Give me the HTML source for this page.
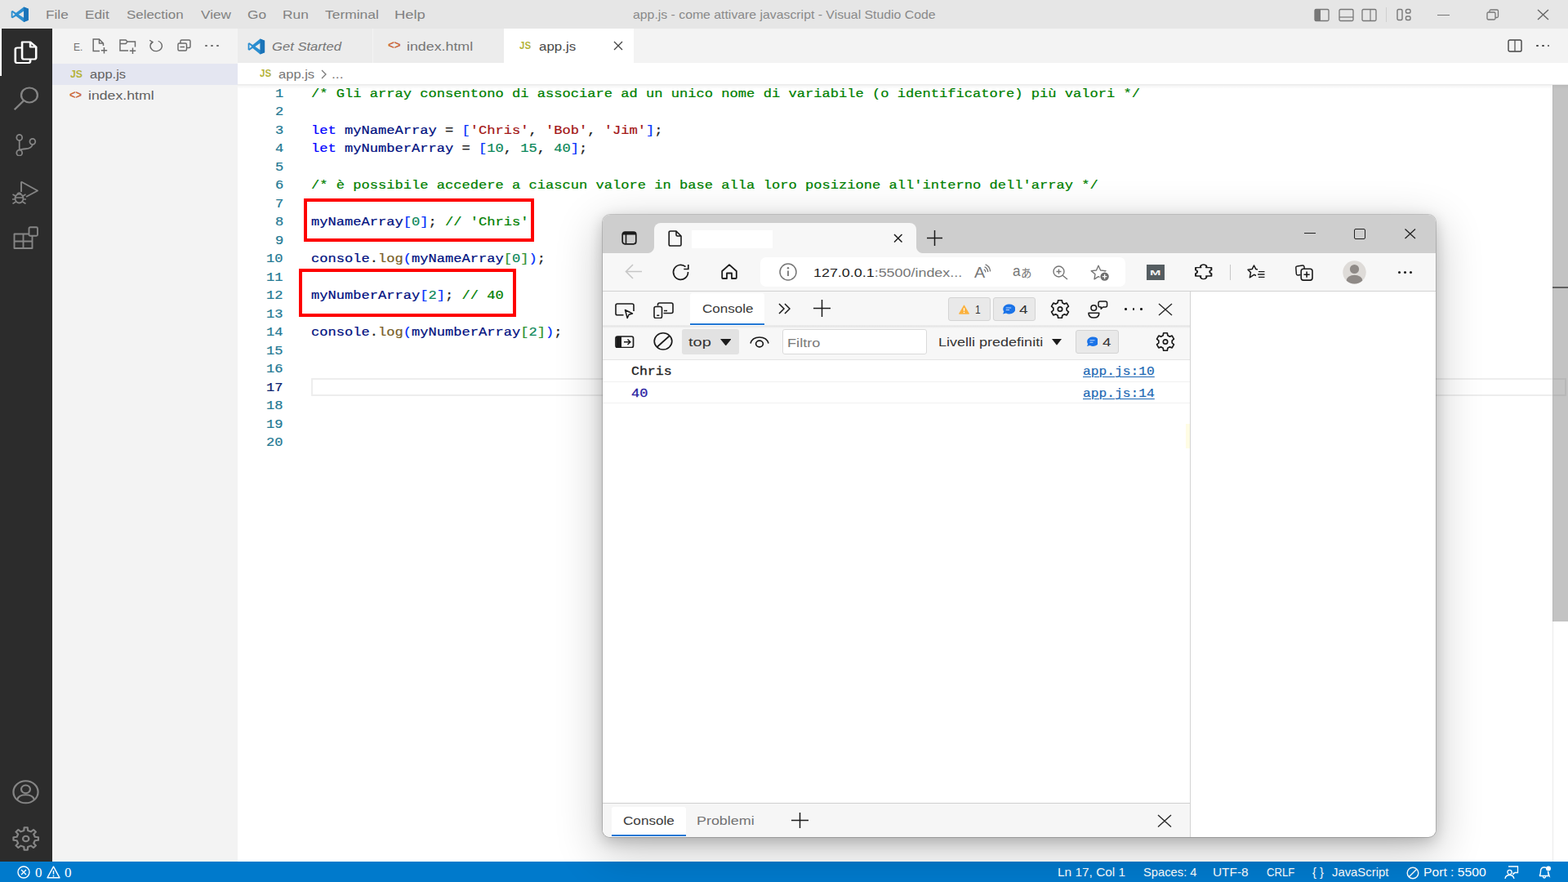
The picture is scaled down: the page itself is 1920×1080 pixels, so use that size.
<!DOCTYPE html>
<html lang="it"><head><meta charset="utf-8"><title>app.js - come attivare javascript - Visual Studio Code</title>
<style>
html,body{margin:0;padding:0;}
html{width:1920px;height:1080px;overflow:hidden;}
body{width:1920px;height:1080px;overflow:hidden;position:relative;background:#fff;font-family:"Liberation Sans",sans-serif;}
.root{position:absolute;left:0;top:0;width:1920px;height:1080px;overflow:hidden;}
.r{position:absolute;}
.i{position:absolute;display:block;}
.t{position:absolute;white-space:pre;line-height:24px;height:24px;transform-origin:0 50%;}
.win{position:absolute;left:738px;top:262.5px;width:1020px;height:762px;border-radius:9px;overflow:hidden;box-shadow:0 0 0 1px rgba(0,0,0,.17),0 16px 54px 5px rgba(0,0,0,.2),0 5px 18px rgba(0,0,0,.2);}
.wini{position:absolute;left:-738px;top:-262.5px;width:1920px;height:1080px;}
</style></head>
<body>
<div class="root">
<div class="r" style="left:0px;top:0px;width:1920px;height:35.5px;background:#e6e6e6;"></div>
<svg class="i" preserveAspectRatio="none" style="left:12.6px;top:8.4px;width:22.8px;height:19.4px;" viewBox="0 0 100 100"><path fill="#2b8ed0" d="M71 2 L96 14 V86 L71 98 L29 60 L11 74 L3 70 V30 L11 26 L29 40 Z M71 29 L43 50 L71 71 Z M11 38 V62 L24 50 Z"/><path fill="#1a73b8" d="M71 2 L96 14 V86 L71 98 Z"/></svg>
<span class="t" id="t0" style="left:55.81px;top:6.01px;font-size:14.5px;color:#818181;font-family:'Liberation Sans', sans-serif;transform:scaleX(1.1883);">File</span>
<span class="t" id="t1" style="left:103.81px;top:6.01px;font-size:14.5px;color:#818181;font-family:'Liberation Sans', sans-serif;transform:scaleX(1.1896);">Edit</span>
<span class="t" id="t2" style="left:155.0px;top:6.01px;font-size:14.5px;color:#818181;font-family:'Liberation Sans', sans-serif;transform:scaleX(1.1664);">Selection</span>
<span class="t" id="t3" style="left:246.0px;top:6.01px;font-size:14.5px;color:#818181;font-family:'Liberation Sans', sans-serif;transform:scaleX(1.1831);">View</span>
<span class="t" id="t4" style="left:303.0px;top:6.01px;font-size:14.5px;color:#818181;font-family:'Liberation Sans', sans-serif;transform:scaleX(1.1930);">Go</span>
<span class="t" id="t5" style="left:345.81px;top:6.01px;font-size:14.5px;color:#818181;font-family:'Liberation Sans', sans-serif;transform:scaleX(1.1944);">Run</span>
<span class="t" id="t6" style="left:398.0px;top:6.01px;font-size:14.5px;color:#818181;font-family:'Liberation Sans', sans-serif;transform:scaleX(1.2003);">Terminal</span>
<span class="t" id="t7" style="left:482.73px;top:6.01px;font-size:14.5px;color:#818181;font-family:'Liberation Sans', sans-serif;transform:scaleX(1.2693);">Help</span>
<span class="t" id="t8" style="left:775.0px;top:6.01px;font-size:14.5px;color:#8a8a8a;font-family:'Liberation Sans', sans-serif;transform:scaleX(1.0904);">app.js - come attivare javascript - Visual Studio Code</span>
<svg class="i" preserveAspectRatio="none" style="left:1608.8px;top:9.6px;width:19px;height:17px;" viewBox="0 0 19 17"><rect x="1" y="1.5" width="17" height="14" rx="1.5" fill="none" stroke="#777" stroke-width="1.3"/><rect x="1" y="1.5" width="7" height="14" fill="#777"/></svg>
<svg class="i" preserveAspectRatio="none" style="left:1638.6px;top:9.6px;width:19px;height:17px;" viewBox="0 0 19 17"><rect x="1" y="1.5" width="17" height="14" rx="1.5" fill="none" stroke="#777" stroke-width="1.3"/><path d="M1 11H18" stroke="#777" stroke-width="1.2"/></svg>
<svg class="i" preserveAspectRatio="none" style="left:1667.4px;top:9.6px;width:19px;height:17px;" viewBox="0 0 19 17"><rect x="1" y="1.5" width="17" height="14" rx="1.5" fill="none" stroke="#777" stroke-width="1.3"/><path d="M11 1.5V15.5" stroke="#777" stroke-width="1.2"/></svg>
<div class="r" style="left:1697px;top:9px;width:1px;height:18px;background:#cfcfcf;"></div>
<svg class="i" preserveAspectRatio="none" style="left:1710px;top:10px;width:19px;height:16px;" viewBox="0 0 19 16"><rect x="1" y="1.5" width="6" height="13" rx="1.5" fill="none" stroke="#777" stroke-width="1.4"/><rect x="11.5" y="1.5" width="5.5" height="4.5" rx="1.5" fill="none" stroke="#777" stroke-width="1.4"/><rect x="11.5" y="10" width="5.5" height="4.5" rx="1.5" fill="none" stroke="#777" stroke-width="1.4"/></svg>
<div class="r" style="left:1760px;top:18px;width:15px;height:1.2px;background:#777;"></div>
<svg class="i" preserveAspectRatio="none" style="left:1820px;top:11px;width:16px;height:14px;" viewBox="0 0 16 14"><rect x="1" y="4" width="10" height="9" rx="1.5" fill="none" stroke="#777" stroke-width="1.3"/><path d="M4 4V2.5Q4 1 5.5 1H13Q14.5 1 14.5 2.5V9Q14.5 10.5 13 10.5H11" fill="none" stroke="#777" stroke-width="1.3"/></svg>
<svg class="i" preserveAspectRatio="none" style="left:1882px;top:11px;width:15px;height:14px;" viewBox="0 0 15 14"><path d="M1 1L14 13M14 1L1 13" stroke="#666" stroke-width="1.4" fill="none"/></svg>
<div class="r" style="left:0px;top:35px;width:64px;height:1020px;background:#2c2c2c;"></div>
<div class="r" style="left:0px;top:35px;width:2.3px;height:57.5px;background:#ffffff;"></div>
<svg class="i" preserveAspectRatio="none" style="left:16.5px;top:49.5px;width:29px;height:28.5px;overflow:visible" viewBox="0 0 24.5 28.5"><path d="M8.5 1.5H17L23 7.5V20.5Q23 22.5 21 22.5H10.5Q8.5 22.5 8.5 20.5Z M17 1.5V7.5H23" fill="none" stroke="#fff" stroke-width="2.2" stroke-linejoin="round"/><path d="M8.5 8.5H3.5Q1.5 8.5 1.5 10.5V25Q1.5 27 3.5 27H15Q17 27 17 25V22.5" fill="none" stroke="#fff" stroke-width="2.2" stroke-linejoin="round"/></svg>
<svg class="i" preserveAspectRatio="none" style="left:13.9px;top:106.3px;width:34.7px;height:29.3px;" viewBox="0 0 30 28"><circle cx="19" cy="10" r="8.6" fill="none" stroke="#858585" stroke-width="2"/><path d="M13 16.5L3.2 27" stroke="#858585" stroke-width="2" fill="none"/></svg>
<svg class="i" preserveAspectRatio="none" style="left:19.3px;top:163.8px;width:25.6px;height:27.6px;" viewBox="0 0 27 28"><circle cx="5" cy="4.5" r="3.6" fill="none" stroke="#858585" stroke-width="1.9"/><circle cx="5" cy="23.5" r="3.6" fill="none" stroke="#858585" stroke-width="1.9"/><circle cx="22" cy="9.5" r="3.6" fill="none" stroke="#858585" stroke-width="1.9"/><path d="M5 8V20M22 13Q21 18 13 18.5Q7 19 5.5 20" fill="none" stroke="#858585" stroke-width="1.9"/></svg>
<svg class="i" preserveAspectRatio="none" style="left:15px;top:220.5px;width:32px;height:29.5px;" viewBox="0 0 32 29.5"><path d="M11 1.5L31 12.5L17 20" fill="none" stroke="#858585" stroke-width="1.9" stroke-linejoin="round"/><path d="M11 1.5V14" stroke="#858585" stroke-width="1.9"/><ellipse cx="8.5" cy="22" rx="5" ry="5.5" fill="none" stroke="#858585" stroke-width="1.8"/><path d="M3.5 21H13.5M0.5 17L4 19M16.5 17L13 19M0 23H3.5M13.5 23H17M0.5 28.5L4.5 26M16.5 28.5L12.5 26M6 16.5Q8.5 13.5 11 16.5" fill="none" stroke="#858585" stroke-width="1.6"/></svg>
<svg class="i" preserveAspectRatio="none" style="left:16px;top:277px;width:31.5px;height:28.5px;" viewBox="0 0 31.5 28.5"><path d="M1.5 9.5H23.5V27H1.5ZM12.5 9.5V27M1.5 18.5H23.5" fill="none" stroke="#858585" stroke-width="1.9" stroke-linejoin="round"/><rect x="19.5" y="1.2" width="10.5" height="10.5" rx="1.5" fill="#2c2c2c" stroke="#858585" stroke-width="1.9"/></svg>
<svg class="i" preserveAspectRatio="none" style="left:15.3px;top:955.4px;width:33px;height:29.6px;" viewBox="0 0 30 30"><circle cx="15" cy="15" r="13.7" fill="none" stroke="#858585" stroke-width="2"/><circle cx="15" cy="11.5" r="5" fill="none" stroke="#858585" stroke-width="2"/><path d="M5.5 24.5Q7 18.5 15 18.5Q23 18.5 24.5 24.5" fill="none" stroke="#858585" stroke-width="2"/></svg>
<svg class="i" preserveAspectRatio="none" style="left:14.8px;top:1011.8px;width:33.4px;height:30px;" viewBox="0 0 30 30"><path d="M12.85 5.03 L13.16 1.32 L16.84 1.32 L17.15 5.03 L20.53 6.43 L23.37 4.03 L25.97 6.63 L23.57 9.47 L24.97 12.85 L28.68 13.16 L28.68 16.84 L24.97 17.15 L23.57 20.53 L25.97 23.37 L23.37 25.97 L20.53 23.57 L17.15 24.97 L16.84 28.68 L13.16 28.68 L12.85 24.97 L9.47 23.57 L6.63 25.97 L4.03 23.37 L6.43 20.53 L5.03 17.15 L1.32 16.84 L1.32 13.16 L5.03 12.85 L6.43 9.47 L4.03 6.63 L6.63 4.03 L9.47 6.43Z" fill="none" stroke="#858585" stroke-width="2" stroke-linejoin="round"/><circle cx="15" cy="15" r="3.3" fill="none" stroke="#858585" stroke-width="2"/></svg>
<div class="r" style="left:64px;top:35px;width:227px;height:1020px;background:#f3f3f3;"></div>
<div class="r" style="left:64px;top:77.5px;width:227px;height:26px;background:#e4e6f1;"></div>
<span class="t" id="t9" style="left:90.11px;top:45.51px;font-size:13.6px;color:#6f6f6f;font-family:'Liberation Sans', sans-serif;transform:scaleX(0.8855);">E.</span>
<svg class="i" preserveAspectRatio="none" style="left:113px;top:47px;width:19px;height:19px;" viewBox="0 0 19 19"><path d="M9 15.5H1.2V1H8.5L13.5 6V9M8.5 1V6H13.5" fill="none" stroke="#6a6a6a" stroke-width="1.45"/><path d="M14.5 11V18.5M10.8 14.8H18.2" stroke="#6a6a6a" stroke-width="1.45"/></svg>
<svg class="i" preserveAspectRatio="none" style="left:145.5px;top:48px;width:21px;height:18.5px;" viewBox="0 0 21 18.5"><path d="M11 14H1V1H8L10 3H19.5V9.5M1 5.5H8L10 3" fill="none" stroke="#6a6a6a" stroke-width="1.45"/><path d="M16.5 10.5V18M12.8 14.2H20.2" stroke="#6a6a6a" stroke-width="1.45"/></svg>
<svg class="i" preserveAspectRatio="none" style="left:182px;top:48.4px;width:17.6px;height:15.6px;overflow:visible" viewBox="0 0 18 18"><path d="M5 3.6A7.4 7.4 0 1 0 12 2.6" fill="none" stroke="#6a6a6a" stroke-width="1.5"/><path d="M1.2 1.5L5.2 4.2L2.5 7" fill="none" stroke="#6a6a6a" stroke-width="1.4"/></svg>
<svg class="i" preserveAspectRatio="none" style="left:216.8px;top:48.2px;width:17px;height:15px;" viewBox="0 0 17 15"><rect x="1" y="5" width="10.5" height="9" rx="1.5" fill="none" stroke="#6a6a6a" stroke-width="1.45"/><path d="M4 5V2.5Q4 1 5.5 1H14.5Q16 1 16 2.5V9Q16 10.5 14.5 10.5H11.5M3.5 9.5H9" fill="none" stroke="#6a6a6a" stroke-width="1.45"/></svg>
<div class="r" style="left:251.3px;top:54.8px;width:2.8px;height:2.6px;background:#6a6a6a;border-radius:1.3px;"></div>
<div class="r" style="left:258.3px;top:54.8px;width:2.8px;height:2.6px;background:#6a6a6a;border-radius:1.3px;"></div>
<div class="r" style="left:265.3px;top:54.8px;width:2.8px;height:2.6px;background:#6a6a6a;border-radius:1.3px;"></div>
<span class="t" id="t10" style="left:85.5px;top:79.01px;font-size:12.4px;color:#b5b33a;font-family:'Liberation Sans', sans-serif;font-weight:700;transform:scaleX(0.9939);">JS</span>
<span class="t" id="t11" style="left:109.5px;top:78.51px;font-size:15.3px;color:#616161;font-family:'Liberation Sans', sans-serif;transform:scaleX(1.0809);">app.js</span>
<span class="t" id="t12" style="left:85.3px;top:103.51px;font-size:15.5px;color:#cb6a40;font-family:'Liberation Sans', sans-serif;font-weight:700;transform:scaleX(0.8309);">&lt;&gt;</span>
<span class="t" id="t13" style="left:108.34px;top:104.51px;font-size:15.3px;color:#616161;font-family:'Liberation Sans', sans-serif;transform:scaleX(1.1563);">index.html</span>
<div class="r" style="left:291px;top:35px;width:1629px;height:42px;background:#f3f3f3;"></div>
<div class="r" style="left:291px;top:35px;width:164.5px;height:42px;background:#ececec;"></div>
<div class="r" style="left:456.5px;top:35px;width:160.5px;height:42px;background:#ececec;"></div>
<div class="r" style="left:617px;top:35px;width:159px;height:42.5px;background:#ffffff;"></div>
<svg class="i" preserveAspectRatio="none" style="left:303px;top:47px;width:22px;height:20px;" viewBox="0 0 100 100"><path fill="#2b8ed0" d="M71 2 L96 14 V86 L71 98 L29 60 L11 74 L3 70 V30 L11 26 L29 40 Z M71 29 L43 50 L71 71 Z M11 38 V62 L24 50 Z"/><path fill="#1a73b8" d="M71 2 L96 14 V86 L71 98 Z"/></svg>
<span class="t" id="t14" style="left:333.0px;top:44.51px;font-size:15.3px;color:#767676;font-family:'Liberation Sans', sans-serif;font-style:italic;transform:scaleX(1.0862);">Get Started</span>
<span class="t" id="t15" style="left:474.7px;top:42.51px;font-size:15.5px;color:#cb6a40;font-family:'Liberation Sans', sans-serif;font-weight:700;transform:scaleX(0.8642);">&lt;&gt;</span>
<span class="t" id="t16" style="left:497.84px;top:44.51px;font-size:15.3px;color:#767676;font-family:'Liberation Sans', sans-serif;transform:scaleX(1.1637);">index.html</span>
<span class="t" id="t17" style="left:636.3px;top:44.01px;font-size:12.2px;color:#b5b33a;font-family:'Liberation Sans', sans-serif;font-weight:700;transform:scaleX(0.9406);">JS</span>
<span class="t" id="t18" style="left:659.5px;top:44.51px;font-size:15.3px;color:#484848;font-family:'Liberation Sans', sans-serif;transform:scaleX(1.1052);">app.js</span>
<svg class="i" preserveAspectRatio="none" style="left:751px;top:50px;width:12px;height:12px;" viewBox="0 0 12 12"><path d="M1 1L11 11M11 1L1 11" stroke="#444" stroke-width="1.3" fill="none"/></svg>
<svg class="i" preserveAspectRatio="none" style="left:1845.5px;top:47.5px;width:18px;height:16px;" viewBox="0 0 18 16"><rect x="1" y="1" width="16" height="14" rx="1.8" fill="none" stroke="#444" stroke-width="1.4"/><path d="M9 1V15" stroke="#555" stroke-width="1.3"/></svg>
<div class="r" style="left:1880.8px;top:54.8px;width:2.8px;height:2.6px;background:#444;border-radius:1.3px;"></div>
<div class="r" style="left:1887.8px;top:54.8px;width:2.8px;height:2.6px;background:#444;border-radius:1.3px;"></div>
<div class="r" style="left:1894.6px;top:54.8px;width:2.8px;height:2.6px;background:#444;border-radius:1.3px;"></div>
<div class="r" style="left:291px;top:77px;width:1629px;height:978px;background:#ffffff;"></div>
<div class="r" style="left:291px;top:103.3px;width:1629px;height:6px;background:linear-gradient(rgba(0,0,0,.085),rgba(0,0,0,.03) 45%,rgba(0,0,0,0));"></div>
<span class="t" id="t19" style="left:317.5px;top:78.01px;font-size:12.2px;color:#b5b33a;font-family:'Liberation Sans', sans-serif;font-weight:700;transform:scaleX(0.9473);">JS</span>
<span class="t" id="t20" style="left:341.0px;top:78.51px;font-size:15.3px;color:#767676;font-family:'Liberation Sans', sans-serif;transform:scaleX(1.0809);">app.js</span>
<svg class="i" preserveAspectRatio="none" style="left:392.5px;top:84.5px;width:7.5px;height:12px;" viewBox="0 0 7.5 12"><path d="M1 1L6 6L1 11" fill="none" stroke="#777" stroke-width="1.3"/></svg>
<span class="t" id="t21" style="left:406.36px;top:78.51px;font-size:15.3px;color:#767676;font-family:'Liberation Sans', sans-serif;transform:scaleX(1.1429);">...</span>
<div class="r" style="left:381px;top:463.2px;width:1537px;height:22px;box-sizing:border-box;border:2px solid #ededed;"></div>
<div class="r" style="left:1901px;top:104px;width:1px;height:951px;background:#ebebeb;"></div>
<div class="r" style="left:1901.2px;top:104px;width:18.8px;height:656.5px;background:rgba(100,100,100,.39);"></div>
<div class="r" style="left:1901.2px;top:351px;width:18.8px;height:2px;background:#606060;"></div>
<div class="r" style="left:0px;top:1055px;width:1920px;height:25px;background:#007acc;"></div>
<svg class="i" preserveAspectRatio="none" style="left:21px;top:1060px;width:16px;height:16px;" viewBox="0 0 16 16"><circle cx="8" cy="8" r="7" fill="none" stroke="#ffffff" stroke-width="1.4"/><path d="M5 5L11 11M11 5L5 11" stroke="#ffffff" stroke-width="1.4"/></svg>
<span class="t" id="t22" style="left:43.0px;top:1056.51px;font-size:16px;color:#ffffff;font-family:'Liberation Serif', serif;transform:scaleX(1.0625);">0</span>
<svg class="i" preserveAspectRatio="none" style="left:56.5px;top:1059.5px;width:17px;height:16px;" viewBox="0 0 17 16"><path d="M8.5 1.2L16 14.8H1Z" fill="none" stroke="#ffffff" stroke-width="1.4" stroke-linejoin="round"/><path d="M8.5 6V10.5M8.5 11.8V13.4" stroke="#ffffff" stroke-width="1.5"/></svg>
<span class="t" id="t23" style="left:79.0px;top:1056.51px;font-size:16px;color:#ffffff;font-family:'Liberation Serif', serif;transform:scaleX(1.0625);">0</span>
<span class="t" id="t24" style="left:1295.44px;top:1056.01px;font-size:14.5px;color:#ffffff;font-family:'Liberation Sans', sans-serif;transform:scaleX(1.0632);">Ln 17, Col 1</span>
<span class="t" id="t25" style="left:1400.0px;top:1056.01px;font-size:14.5px;color:#ffffff;font-family:'Liberation Sans', sans-serif;transform:scaleX(1.0167);">Spaces: 4</span>
<span class="t" id="t26" style="left:1485.44px;top:1056.01px;font-size:14.5px;color:#ffffff;font-family:'Liberation Sans', sans-serif;transform:scaleX(1.0621);">UTF-8</span>
<span class="t" id="t27" style="left:1550.5px;top:1056.01px;font-size:14.5px;color:#ffffff;font-family:'Liberation Sans', sans-serif;transform:scaleX(0.9077);">CRLF</span>
<span class="t" id="t28" style="left:1606.5px;top:1056.01px;font-size:14.5px;color:#ffffff;font-family:'Liberation Sans', sans-serif;transform:scaleX(1.0093);">{ }</span>
<span class="t" id="t29" style="left:1630.5px;top:1056.01px;font-size:14.5px;color:#ffffff;font-family:'Liberation Sans', sans-serif;transform:scaleX(1.0242);">JavaScript</span>
<span class="t" id="t30" style="left:1743.42px;top:1056.01px;font-size:14.5px;color:#ffffff;font-family:'Liberation Sans', sans-serif;transform:scaleX(1.0806);">Port : 5500</span>
<svg class="i" preserveAspectRatio="none" style="left:1722px;top:1060.5px;width:16px;height:16px;" viewBox="0 0 16 16"><circle cx="8" cy="8" r="6.8" fill="none" stroke="#ffffff" stroke-width="1.4"/><path d="M3.2 12.8L12.8 3.2" stroke="#ffffff" stroke-width="1.4"/></svg>
<svg class="i" preserveAspectRatio="none" style="left:1842px;top:1059.5px;width:17.5px;height:16.5px;" viewBox="0 0 17.5 16.5"><path d="M5 1H16.5V8.5H13L11 10.5V8.5" fill="none" stroke="#ffffff" stroke-width="1.3"/><circle cx="6.5" cy="8" r="2.6" fill="none" stroke="#ffffff" stroke-width="1.3"/><path d="M1 16Q1.5 11.5 6.5 11.5Q11 11.5 12 16" fill="none" stroke="#ffffff" stroke-width="1.3"/></svg>
<svg class="i" preserveAspectRatio="none" style="left:1882.5px;top:1059.5px;width:17px;height:17px;" viewBox="0 0 17 17"><path d="M2 12.5Q3.5 11 3.5 7Q3.5 2 8 2Q9.5 2 10.5 2.8M12.5 7Q12.5 11 14 12.5Z M2 12.5H14M6.2 13.5Q8 16.5 9.8 13.5" fill="none" stroke="#ffffff" stroke-width="1.4"/><circle cx="13" cy="3.5" r="3" fill="#ffffff"/></svg>
<span class="t" id="t31" style="left:336.5475px;top:103.01px;font-size:15.2px;color:#237893;font-family:'Liberation Mono', monospace;transform:scaleX(1.1236);-webkit-text-stroke:0.22px;">1</span>
<span class="t" id="t32" style="left:381.1px;top:103.01px;font-size:15.2px;color:#1e1e1e;font-family:'Liberation Mono', monospace;transform:scaleX(1.1249);-webkit-text-stroke:0.22px;"><span style="color:#008000">/* Gli array consentono di associare ad un unico nome di variabile (o identificatore) più valori */</span></span>
<span class="t" id="t33" style="left:336.5475px;top:125.01px;font-size:15.2px;color:#237893;font-family:'Liberation Mono', monospace;transform:scaleX(1.1236);-webkit-text-stroke:0.22px;">2</span>
<span class="t" id="t34" style="left:336.5475px;top:148.01px;font-size:15.2px;color:#237893;font-family:'Liberation Mono', monospace;transform:scaleX(1.1236);-webkit-text-stroke:0.22px;">3</span>
<span class="t" id="t35" style="left:381.1px;top:148.01px;font-size:15.2px;color:#1e1e1e;font-family:'Liberation Mono', monospace;transform:scaleX(1.1246);-webkit-text-stroke:0.22px;"><span style="color:#0000ff">let</span><span style="color:#1e1e1e"> </span><span style="color:#001080">myNameArray</span><span style="color:#1e1e1e"> = </span><span style="color:#0431fa">[</span><span style="color:#a31515">&#x27;Chris&#x27;</span><span style="color:#1e1e1e">, </span><span style="color:#a31515">&#x27;Bob&#x27;</span><span style="color:#1e1e1e">, </span><span style="color:#a31515">&#x27;Jim&#x27;</span><span style="color:#0431fa">]</span><span style="color:#1e1e1e">;</span></span>
<span class="t" id="t36" style="left:336.5475px;top:170.01px;font-size:15.2px;color:#237893;font-family:'Liberation Mono', monospace;transform:scaleX(1.1236);-webkit-text-stroke:0.22px;">4</span>
<span class="t" id="t37" style="left:381.1px;top:170.01px;font-size:15.2px;color:#1e1e1e;font-family:'Liberation Mono', monospace;transform:scaleX(1.1246);-webkit-text-stroke:0.22px;"><span style="color:#0000ff">let</span><span style="color:#1e1e1e"> </span><span style="color:#001080">myNumberArray</span><span style="color:#1e1e1e"> = </span><span style="color:#0431fa">[</span><span style="color:#098658">10</span><span style="color:#1e1e1e">, </span><span style="color:#098658">15</span><span style="color:#1e1e1e">, </span><span style="color:#098658">40</span><span style="color:#0431fa">]</span><span style="color:#1e1e1e">;</span></span>
<span class="t" id="t38" style="left:336.5475px;top:193.01px;font-size:15.2px;color:#237893;font-family:'Liberation Mono', monospace;transform:scaleX(1.1236);-webkit-text-stroke:0.22px;">5</span>
<span class="t" id="t39" style="left:336.5475px;top:215.01px;font-size:15.2px;color:#237893;font-family:'Liberation Mono', monospace;transform:scaleX(1.1236);-webkit-text-stroke:0.22px;">6</span>
<span class="t" id="t40" style="left:381.1px;top:215.01px;font-size:15.2px;color:#1e1e1e;font-family:'Liberation Mono', monospace;transform:scaleX(1.1249);-webkit-text-stroke:0.22px;"><span style="color:#008000">/* è possibile accedere a ciascun valore in base alla loro posizione all&#x27;interno dell&#x27;array */</span></span>
<span class="t" id="t41" style="left:336.5475px;top:238.01px;font-size:15.2px;color:#237893;font-family:'Liberation Mono', monospace;transform:scaleX(1.1236);-webkit-text-stroke:0.22px;">7</span>
<span class="t" id="t42" style="left:336.5475px;top:260.01px;font-size:15.2px;color:#237893;font-family:'Liberation Mono', monospace;transform:scaleX(1.1236);-webkit-text-stroke:0.22px;">8</span>
<span class="t" id="t43" style="left:381.1px;top:260.01px;font-size:15.2px;color:#1e1e1e;font-family:'Liberation Mono', monospace;transform:scaleX(1.1247);-webkit-text-stroke:0.22px;"><span style="color:#001080">myNameArray</span><span style="color:#0431fa">[</span><span style="color:#098658">0</span><span style="color:#0431fa">]</span><span style="color:#1e1e1e">; </span><span style="color:#008000">// &#x27;Chris&#x27;</span></span>
<span class="t" id="t44" style="left:336.5475px;top:283.01px;font-size:15.2px;color:#237893;font-family:'Liberation Mono', monospace;transform:scaleX(1.1236);-webkit-text-stroke:0.22px;">9</span>
<span class="t" id="t45" style="left:326.295px;top:305.01px;font-size:15.2px;color:#237893;font-family:'Liberation Mono', monospace;transform:scaleX(1.1245);-webkit-text-stroke:0.22px;">10</span>
<span class="t" id="t46" style="left:381.1px;top:305.01px;font-size:15.2px;color:#1e1e1e;font-family:'Liberation Mono', monospace;transform:scaleX(1.1245);-webkit-text-stroke:0.22px;"><span style="color:#001080">console</span><span style="color:#1e1e1e">.</span><span style="color:#795e26">log</span><span style="color:#0431fa">(</span><span style="color:#001080">myNameArray</span><span style="color:#319331">[</span><span style="color:#098658">0</span><span style="color:#319331">]</span><span style="color:#0431fa">)</span><span style="color:#1e1e1e">;</span></span>
<span class="t" id="t47" style="left:326.295px;top:328.01px;font-size:15.2px;color:#237893;font-family:'Liberation Mono', monospace;transform:scaleX(1.1245);-webkit-text-stroke:0.22px;">11</span>
<span class="t" id="t48" style="left:326.295px;top:350.01px;font-size:15.2px;color:#237893;font-family:'Liberation Mono', monospace;transform:scaleX(1.1245);-webkit-text-stroke:0.22px;">12</span>
<span class="t" id="t49" style="left:381.1px;top:350.01px;font-size:15.2px;color:#1e1e1e;font-family:'Liberation Mono', monospace;transform:scaleX(1.1247);-webkit-text-stroke:0.22px;"><span style="color:#001080">myNumberArray</span><span style="color:#0431fa">[</span><span style="color:#098658">2</span><span style="color:#0431fa">]</span><span style="color:#1e1e1e">; </span><span style="color:#008000">// 40</span></span>
<span class="t" id="t50" style="left:326.295px;top:373.01px;font-size:15.2px;color:#237893;font-family:'Liberation Mono', monospace;transform:scaleX(1.1245);-webkit-text-stroke:0.22px;">13</span>
<span class="t" id="t51" style="left:326.295px;top:395.01px;font-size:15.2px;color:#237893;font-family:'Liberation Mono', monospace;transform:scaleX(1.1245);-webkit-text-stroke:0.22px;">14</span>
<span class="t" id="t52" style="left:381.1px;top:395.01px;font-size:15.2px;color:#1e1e1e;font-family:'Liberation Mono', monospace;transform:scaleX(1.1245);-webkit-text-stroke:0.22px;"><span style="color:#001080">console</span><span style="color:#1e1e1e">.</span><span style="color:#795e26">log</span><span style="color:#0431fa">(</span><span style="color:#001080">myNumberArray</span><span style="color:#319331">[</span><span style="color:#098658">2</span><span style="color:#319331">]</span><span style="color:#0431fa">)</span><span style="color:#1e1e1e">;</span></span>
<span class="t" id="t53" style="left:326.295px;top:418.01px;font-size:15.2px;color:#237893;font-family:'Liberation Mono', monospace;transform:scaleX(1.1245);-webkit-text-stroke:0.22px;">15</span>
<span class="t" id="t54" style="left:326.295px;top:440.01px;font-size:15.2px;color:#237893;font-family:'Liberation Mono', monospace;transform:scaleX(1.1245);-webkit-text-stroke:0.22px;">16</span>
<span class="t" id="t55" style="left:326.295px;top:463.01px;font-size:15.2px;color:#0b216f;font-family:'Liberation Mono', monospace;transform:scaleX(1.1245);-webkit-text-stroke:0.22px;">17</span>
<span class="t" id="t56" style="left:326.295px;top:485.01px;font-size:15.2px;color:#237893;font-family:'Liberation Mono', monospace;transform:scaleX(1.1245);-webkit-text-stroke:0.22px;">18</span>
<span class="t" id="t57" style="left:326.295px;top:508.01px;font-size:15.2px;color:#237893;font-family:'Liberation Mono', monospace;transform:scaleX(1.1245);-webkit-text-stroke:0.22px;">19</span>
<span class="t" id="t58" style="left:326.295px;top:530.01px;font-size:15.2px;color:#237893;font-family:'Liberation Mono', monospace;transform:scaleX(1.1245);-webkit-text-stroke:0.22px;">20</span>
<div class="r" style="left:371.5px;top:242.5px;width:282.5px;height:53px;box-sizing:border-box;border:4px solid #fe0000;"></div>
<div class="r" style="left:365.5px;top:329px;width:266.5px;height:59px;box-sizing:border-box;border:4px solid #fe0000;"></div>
<div class="win"><div class="wini">
<div class="r" style="left:738px;top:263px;width:1020px;height:47.5px;background:#cecece;"></div>
<div class="r" style="left:738px;top:310px;width:1020px;height:46px;background:#f7f7f7;"></div>
<div class="r" style="left:738px;top:356px;width:1020px;height:1px;background:#d2d2d2;"></div>
<div class="r" style="left:738px;top:357px;width:1020px;height:667px;background:#ffffff;"></div>
<div class="r" style="left:801px;top:272.5px;width:321px;height:38px;background:#f7f7f7;border-radius:8px 8px 0 0;"></div>
<div class="r" style="left:793px;top:302px;width:8px;height:8px;background:radial-gradient(circle at 0 0, rgba(0,0,0,0) 7.5px, #f7f7f7 8.5px);"></div>
<div class="r" style="left:1122px;top:302px;width:8px;height:8px;background:radial-gradient(circle at 100% 0, rgba(0,0,0,0) 7.5px, #f7f7f7 8.5px);"></div>
<svg class="i" preserveAspectRatio="none" style="left:761px;top:283px;width:19px;height:17px;" viewBox="0 0 19 17"><rect x="1.2" y="1.2" width="16.6" height="14.6" rx="3" fill="none" stroke="#1b1b1b" stroke-width="1.7"/><path d="M1.5 4.5Q1.5 1.2 4.5 1.2H14.5Q17.5 1.2 17.5 4.5Z" fill="#1b1b1b"/><path d="M5.5 4V15.5" stroke="#1b1b1b" stroke-width="1.6"/></svg>
<svg class="i" preserveAspectRatio="none" style="left:817.5px;top:281.5px;width:17.5px;height:20px;" viewBox="0 0 17.5 20"><path d="M3 1H10L16 7V17.5Q16 19 14.5 19H3Q1.2 19 1.2 17.5V2.5Q1.2 1 3 1ZM10 1V5.5Q10 7 11.5 7H16" fill="none" stroke="#1b1b1b" stroke-width="1.6" stroke-linejoin="round"/></svg>
<div class="r" style="left:846.5px;top:282px;width:99px;height:21.5px;background:#ffffff;"></div>
<svg class="i" preserveAspectRatio="none" style="left:1093.5px;top:286px;width:11.5px;height:11.5px;" viewBox="0 0 11.5 11.5"><path d="M1 1L10.5 10.5M10.5 1L1 10.5" stroke="#1b1b1b" stroke-width="1.5"/></svg>
<svg class="i" preserveAspectRatio="none" style="left:1135px;top:281.5px;width:19px;height:19px;" viewBox="0 0 19 19"><path d="M9.5 0V19M0 9.5H19" stroke="#1b1b1b" stroke-width="1.5"/></svg>
<div class="r" style="left:1596.5px;top:285.2px;width:14px;height:1.3px;background:#222;"></div>
<div class="r" style="left:1658px;top:280.2px;width:14px;height:12.6px;box-sizing:border-box;border:1.3px solid #222;border-radius:2px;"></div>
<svg class="i" preserveAspectRatio="none" style="left:1720px;top:280.3px;width:13.5px;height:12.5px;" viewBox="0 0 13.5 12.5"><path d="M0.5 0.5L13 12M13 0.5L0.5 12" stroke="#222" stroke-width="1.3"/></svg>
<svg class="i" preserveAspectRatio="none" style="left:764.5px;top:322.7px;width:22px;height:19px;" viewBox="0 0 22 19"><path d="M21 9.5H1.5M10 1L1.5 9.5L10 18" fill="none" stroke="#c6c6c6" stroke-width="1.6"/></svg>
<svg class="i" preserveAspectRatio="none" style="left:823px;top:322.5px;width:22px;height:20.5px;overflow:visible" viewBox="0 0 22 20.5"><path d="M19.5 10A9 9 0 1 1 16.5 3.6" fill="none" stroke="#1b1b1b" stroke-width="1.7"/><path d="M19.8 1V6.5H14.3" fill="none" stroke="#1b1b1b" stroke-width="1.7"/></svg>
<svg class="i" preserveAspectRatio="none" style="left:883px;top:322.8px;width:20px;height:19px;" viewBox="0 0 20 19"><path d="M1.2 9L10 1.2L18.8 9V17Q18.8 18 17.8 18H13V11.5H7V18H2.2Q1.2 18 1.2 17Z" fill="none" stroke="#1b1b1b" stroke-width="1.8" stroke-linejoin="round"/></svg>
<div class="r" style="left:930.5px;top:315.4px;width:447.2px;height:35.4px;background:#fff;border-radius:7px;"></div>
<svg class="i" preserveAspectRatio="none" style="left:954px;top:322px;width:22px;height:22px;" viewBox="0 0 22 22"><circle cx="11" cy="11" r="10" fill="none" stroke="#767676" stroke-width="1.5"/><path d="M11 9.5V16" stroke="#767676" stroke-width="1.8"/><circle cx="11" cy="6.3" r="1.2" fill="#767676"/></svg>
<span class="t" id="t59" style="left:996.3px;top:321.51px;font-size:15.2px;color:#777;font-family:'Liberation Sans', sans-serif;transform:scaleX(1.1789);"><span style="color:#1c1c1c">127.0.0.1</span>:5500/index...</span>
<span class="t" id="t60" style="left:1193.0px;top:322.01px;font-size:17.5px;color:#767676;font-family:'Liberation Sans', sans-serif;transform:scaleX(1.1250);">A</span>
<svg class="i" preserveAspectRatio="none" style="left:1204.3px;top:322.8px;width:9.5px;height:11px;" viewBox="0 0 9.5 11"><path d="M0.8 6.8Q2.6 7.6 3 10.4M1.6 3.8Q5.2 5.2 5.8 10M2.6 0.8Q8 2.8 8.6 9.4" fill="none" stroke="#767676" stroke-width="1.35"/></svg>
<span class="t" id="t61" style="left:1239.7px;top:320.01px;font-size:17.5px;color:#767676;font-family:'Liberation Sans', 'Noto Sans CJK JP', sans-serif;transform:scaleX(0.9800);">a</span><span class="t" id="t62" style="left:1249.84px;top:322.01px;font-size:14px;color:#767676;font-family:'Liberation Sans', 'Noto Sans CJK JP', sans-serif;transform:scaleX(0.9583);">あ</span>
<svg class="i" preserveAspectRatio="none" style="left:1288.5px;top:324.5px;width:19px;height:18px;" viewBox="0 0 19 18"><circle cx="7.5" cy="7.5" r="6.5" fill="none" stroke="#767676" stroke-width="1.4"/><path d="M12.2 12.2L18 17M4.5 7.5H10.5M7.5 4.5V10.5" stroke="#767676" stroke-width="1.4"/></svg>
<svg class="i" preserveAspectRatio="none" style="left:1335px;top:323.5px;width:23.5px;height:21px;" viewBox="0 0 23.5 21"><path d="M10 1.2L12.6 7L19 7.6L14.3 11.8L15.5 17L10 14.6L5 17.8L6 11.8L1.2 7.6L7.5 7Z" fill="none" stroke="#767676" stroke-width="1.4" stroke-linejoin="round"/><circle cx="17.6" cy="14.6" r="6.2" fill="#fff"/><circle cx="17.6" cy="14.6" r="5.2" fill="#6e6e6e"/><path d="M14.8 14.6H20.4M17.6 11.8V17.4" stroke="#fff" stroke-width="1.4"/></svg>
<div class="r" style="left:1404px;top:323.8px;width:21.6px;height:18.9px;background:#555d61;"></div>
<span class="t" id="t63" style="left:1407.8px;top:321.51px;font-size:9.6px;color:#f4f4f4;font-family:'Liberation Sans', sans-serif;font-weight:700;transform:scaleX(1.6750);">M</span>
<svg class="i" preserveAspectRatio="none" style="left:1462.2px;top:323px;width:23.4px;height:19.6px;" viewBox="1.5 0 17 21"><path d="M3 5H7.6A2.7 2.7 0 1 1 12.4 5H17V8.2A2.5 2.5 0 0 0 17 12.8V16H12.4A2.7 2.7 0 1 1 7.6 16H3V12.8A2.5 2.5 0 0 0 3 8.2Z" fill="none" stroke="#1b1b1b" stroke-width="1.5" stroke-linejoin="round"/></svg>
<div class="r" style="left:1506px;top:324px;width:1.2px;height:19px;background:#c8c8c8;"></div>
<svg class="i" preserveAspectRatio="none" style="left:1527px;top:324px;width:22.5px;height:18px;overflow:visible" viewBox="0 0 22.5 18"><path d="M11 13.5L8.5 12.3L3.3 15.8L4.5 9.6L1 6.2L6.2 5.6L8.5 1L10.8 5.6L13 5.9" fill="none" stroke="#1b1b1b" stroke-width="1.5" stroke-linejoin="round"/><path d="M14 8.6H21.5M13 12H21.5M14 15.4H21.5" stroke="#1b1b1b" stroke-width="1.4"/></svg>
<svg class="i" preserveAspectRatio="none" style="left:1586px;top:323.5px;width:22px;height:20px;overflow:visible" viewBox="0 0 22 20"><path d="M6.5 12.5L3.3 12.9Q1.6 13 1.4 11.5L0.8 3.8Q0.7 2.2 2.3 2L9 1Q10.6 0.9 10.9 2.3L11.2 4.8" fill="none" stroke="#1b1b1b" stroke-width="1.5"/><rect x="7.2" y="5.3" width="13.8" height="13.8" rx="2.8" fill="none" stroke="#1b1b1b" stroke-width="1.6"/><path d="M10.5 12.2H17.7M14.1 8.6V15.8" stroke="#1b1b1b" stroke-width="1.6"/></svg>
<svg class="i" style="left:1643.5px;top:318.5px;width:29px;height:29px" viewBox="0 0 29 29"><defs><clipPath id="av"><circle cx="14.5" cy="14.5" r="14"/></clipPath></defs><circle cx="14.5" cy="14.5" r="14.2" fill="#dedbd8"/><g clip-path="url(#av)" fill="#8f8a87"><circle cx="14.5" cy="10.5" r="5.6"/><ellipse cx="14.5" cy="25" rx="10" ry="7.3"/></g></svg>
<div class="r" style="left:1711.5px;top:331.5px;width:3px;height:3px;background:#1b1b1b;border-radius:1.5px;"></div>
<div class="r" style="left:1718.5px;top:331.5px;width:3px;height:3px;background:#1b1b1b;border-radius:1.5px;"></div>
<div class="r" style="left:1725.5px;top:331.5px;width:3px;height:3px;background:#1b1b1b;border-radius:1.5px;"></div>
<div class="r" style="left:738px;top:357px;width:719px;height:41.5px;background:#f7f7f7;"></div>
<div class="r" style="left:738px;top:398.5px;width:719px;height:41px;background:#f7f7f7;"></div>
<div class="r" style="left:738px;top:397.6px;width:719px;height:4.5px;background:linear-gradient(rgba(0,0,0,.03),rgba(0,0,0,.075) 35%,rgba(0,0,0,0));"></div>
<div class="r" style="left:738px;top:439.5px;width:719px;height:1px;background:#e4e4e4;"></div>
<div class="r" style="left:1457px;top:357px;width:1.2px;height:669px;background:#d3d3d3;"></div>
<svg class="i" preserveAspectRatio="none" style="left:753px;top:370.5px;width:24px;height:19.5px;overflow:visible" viewBox="0 0 24 19.5"><path d="M10.5 14.8H3Q1 14.8 1 13V3Q1 1 3 1H21Q23 1 23 3V10" fill="none" stroke="#1b1b1b" stroke-width="1.6"/><path d="M12.5 8.5L21.5 13L17 14.2L15.2 18.5Z" fill="none" stroke="#1b1b1b" stroke-width="1.5" stroke-linejoin="round"/></svg>
<svg class="i" preserveAspectRatio="none" style="left:799.5px;top:369.5px;width:25px;height:20.5px;" viewBox="0 0 25 20.5"><path d="M5.5 4.5V3Q5.5 1 7.5 1H22Q24 1 24 3V11.5Q24 13.5 22 13.5H12.5" fill="none" stroke="#1b1b1b" stroke-width="1.6"/><rect x="1" y="5.5" width="9.5" height="14" rx="2" fill="none" stroke="#1b1b1b" stroke-width="1.6"/><path d="M4.2 16.2H7.3M13 10.5H17" stroke="#1b1b1b" stroke-width="1.5"/></svg>
<div class="r" style="left:845px;top:359px;width:91px;height:39.5px;background:#ffffff;border-radius:3px 3px 0 0;"></div>
<div class="r" style="left:845px;top:395.5px;width:91px;height:2.4px;background:#2278d4;"></div>
<span class="t" id="t64" style="left:860.0px;top:365.51px;font-size:15.2px;color:#3a3a3a;font-family:'Liberation Sans', sans-serif;transform:scaleX(1.1217);">Console</span>
<svg class="i" preserveAspectRatio="none" style="left:952.5px;top:371px;width:15px;height:14px;" viewBox="0 0 15 14"><path d="M1 1L7 7L1 13M8 1L14 7L8 13" fill="none" stroke="#1b1b1b" stroke-width="1.5"/></svg>
<svg class="i" preserveAspectRatio="none" style="left:996px;top:366.5px;width:21px;height:21px;" viewBox="0 0 21 21"><path d="M10.5 0V21M0 10.5H21" stroke="#1b1b1b" stroke-width="1.5"/></svg>
<div class="r" style="left:1161px;top:364.3px;width:52px;height:28.5px;box-sizing:border-box;background:#e9e9e9;border:1px solid #d4d4d4;border-radius:3px;"></div>
<svg class="i" preserveAspectRatio="none" style="left:1173.5px;top:372.8px;width:13px;height:12px;" viewBox="0 0 13 12"><path d="M6.5 0.8L12.6 11.2H0.4Z" fill="#fbb13c" stroke="#fbb13c" stroke-width="0.8" stroke-linejoin="round"/><path d="M6.5 4.2V7.8" stroke="#fff" stroke-width="1.3"/><circle cx="6.5" cy="9.5" r="0.8" fill="#fff"/></svg>
<span class="t" id="t65" style="left:1194.4px;top:366.51px;font-size:15px;color:#333;font-family:'Liberation Sans', sans-serif;transform:scaleX(0.8000);">1</span>
<div class="r" style="left:1216.2px;top:364.3px;width:52px;height:28.5px;box-sizing:border-box;background:#e9e9e9;border:1px solid #d4d4d4;border-radius:3px;"></div>
<svg class="i" preserveAspectRatio="none" style="left:1227px;top:372.3px;width:15.8px;height:13px;" viewBox="0 0 15.8 13"><path d="M8 0.5A7.3 6 0 1 1 5 11.4L1 12.5L2.3 9.6A7.3 6 0 0 1 8 0.5Z" fill="#1a73e8"/><path d="M4.8 5H11.2M4.8 7.5H9" stroke="#bcd6fb" stroke-width="1.1"/></svg>
<span class="t" id="t66" style="left:1247.8px;top:366.51px;font-size:15px;color:#333;font-family:'Liberation Sans', sans-serif;transform:scaleX(1.2750);">4</span>
<svg class="i" preserveAspectRatio="none" style="left:1285.5px;top:367px;width:24px;height:23px;overflow:visible" viewBox="0 0 24 23"><path d="M9.19 3.69 L9.71 0.74 L14.29 0.74 L14.81 3.69 L17.36 5.16 L20.17 4.14 L22.46 8.10 L20.17 10.03 L20.17 12.97 L22.46 14.90 L20.17 18.86 L17.36 17.84 L14.81 19.31 L14.29 22.26 L9.71 22.26 L9.19 19.31 L6.64 17.84 L3.83 18.86 L1.54 14.90 L3.83 12.97 L3.83 10.03 L1.54 8.10 L3.83 4.14 L6.64 5.16Z" fill="none" stroke="#1b1b1b" stroke-width="1.7" stroke-linejoin="round" stroke-linecap="round"/><circle cx="12" cy="11.5" r="2.7" fill="none" stroke="#1b1b1b" stroke-width="1.7"/></svg>
<svg class="i" preserveAspectRatio="none" style="left:1332px;top:367.8px;width:24.6px;height:22px;overflow:visible" viewBox="0 0 24.6 22"><circle cx="7.3" cy="9" r="3.3" fill="none" stroke="#1b1b1b" stroke-width="1.6"/><path d="M1 15.3H13.8Q14 21 7.4 21Q0.8 21 1 15.3Z" fill="none" stroke="#1b1b1b" stroke-width="1.6" stroke-linejoin="round"/><path d="M15 1H21.5Q23.6 1 23.6 3V6Q23.6 8 21.5 8H18.6L16.2 10.3V8H15Q13 8 13 6V3Q13 1 15 1Z" fill="none" stroke="#1b1b1b" stroke-width="1.5" stroke-linejoin="round"/></svg>
<div class="r" style="left:1377px;top:377.2px;width:2.6px;height:2.6px;background:#1b1b1b;border-radius:1.3px;"></div>
<div class="r" style="left:1386.5px;top:377.2px;width:2.6px;height:2.6px;background:#1b1b1b;border-radius:1.3px;"></div>
<div class="r" style="left:1396px;top:377.2px;width:2.6px;height:2.6px;background:#1b1b1b;border-radius:1.3px;"></div>
<svg class="i" preserveAspectRatio="none" style="left:1417.5px;top:370.7px;width:18px;height:16px;" viewBox="0 0 18 16"><path d="M1 1L17 15M17 1L1 15" stroke="#2a2a2a" stroke-width="1.45"/></svg>
<svg class="i" preserveAspectRatio="none" style="left:753px;top:410.5px;width:23.5px;height:15.5px;" viewBox="0 0 23.5 15.5"><rect x="1" y="1" width="21.5" height="13.5" rx="2.2" fill="none" stroke="#1b1b1b" stroke-width="1.7"/><path d="M1.5 2.5Q1.5 1 3 1H8V14.5H3Q1.5 14.5 1.5 13Z" fill="#1b1b1b"/><path d="M11 7.8H18.5M15.5 4.5L18.8 7.8L15.5 11" fill="none" stroke="#1b1b1b" stroke-width="1.5"/></svg>
<svg class="i" preserveAspectRatio="none" style="left:799.7px;top:408px;width:24px;height:21px;overflow:visible" viewBox="0 0 24 21"><circle cx="12" cy="10.5" r="10.8" fill="none" stroke="#1b1b1b" stroke-width="1.7" transform="scale(1,0.94)"/><path d="M4.5 17L19.5 3.5" stroke="#1b1b1b" stroke-width="1.7"/></svg>
<div class="r" style="left:835px;top:403.3px;width:70px;height:30.5px;background:#e2e2e2;border-radius:3px;"></div>
<span class="t" id="t67" style="left:842.5px;top:406.51px;font-size:15.5px;color:#333;font-family:'Liberation Sans', sans-serif;transform:scaleX(1.2902);">top</span>
<svg class="i" preserveAspectRatio="none" style="left:881.5px;top:414.5px;width:13.5px;height:8.5px;" viewBox="0 0 13.5 8.5"><path d="M0 0H13.5L6.75 8.5Z" fill="#1b1b1b"/></svg>
<svg class="i" preserveAspectRatio="none" style="left:918.3px;top:412px;width:24px;height:14px;overflow:visible" viewBox="0 0 24 14"><path d="M1 8.5Q3 1 12 1Q21 1 23 8.5" fill="none" stroke="#1b1b1b" stroke-width="1.7"/><ellipse cx="12" cy="9" rx="4.4" ry="3.8" fill="none" stroke="#1b1b1b" stroke-width="1.7"/></svg>
<div class="r" style="left:958.3px;top:403px;width:177px;height:31.3px;box-sizing:border-box;background:#fff;border:1px solid #dadada;border-radius:3px;"></div>
<span class="t" id="t68" style="left:964.33px;top:407.51px;font-size:15.5px;color:#7a7a7a;font-family:'Liberation Sans', sans-serif;transform:scaleX(1.1729);">Filtro</span>
<span class="t" id="t69" style="left:1148.81px;top:406.51px;font-size:15.2px;color:#333;font-family:'Liberation Sans', sans-serif;transform:scaleX(1.1858);">Livelli predefiniti</span>
<svg class="i" preserveAspectRatio="none" style="left:1288.2px;top:414.8px;width:12px;height:7.8px;" viewBox="0 0 12 7.8"><path d="M0 0H12L6 7.8Z" fill="#1b1b1b"/></svg>
<div class="r" style="left:1317.2px;top:404.3px;width:52.5px;height:28.6px;box-sizing:border-box;background:#e9e9e9;border:1px solid #d4d4d4;border-radius:3px;"></div>
<svg class="i" preserveAspectRatio="none" style="left:1329.5px;top:412.3px;width:14.8px;height:12.5px;" viewBox="0 0 15.8 13"><path d="M8 0.5A7.3 6 0 1 1 5 11.4L1 12.5L2.3 9.6A7.3 6 0 0 1 8 0.5Z" fill="#1a73e8"/><path d="M4.8 5H11.2M4.8 7.5H9" stroke="#bcd6fb" stroke-width="1.1"/></svg>
<span class="t" id="t70" style="left:1349.5px;top:406.51px;font-size:15px;color:#333;font-family:'Liberation Sans', sans-serif;transform:scaleX(1.2500);">4</span>
<svg class="i" preserveAspectRatio="none" style="left:1414.5px;top:407.3px;width:24px;height:23px;overflow:visible" viewBox="0 0 24 23"><path d="M9.19 3.69 L9.71 0.74 L14.29 0.74 L14.81 3.69 L17.36 5.16 L20.17 4.14 L22.46 8.10 L20.17 10.03 L20.17 12.97 L22.46 14.90 L20.17 18.86 L17.36 17.84 L14.81 19.31 L14.29 22.26 L9.71 22.26 L9.19 19.31 L6.64 17.84 L3.83 18.86 L1.54 14.90 L3.83 12.97 L3.83 10.03 L1.54 8.10 L3.83 4.14 L6.64 5.16Z" fill="none" stroke="#1b1b1b" stroke-width="1.7" stroke-linejoin="round" stroke-linecap="round"/><circle cx="12" cy="11.5" r="2.7" fill="none" stroke="#1b1b1b" stroke-width="1.7"/></svg>
<div class="r" style="left:738px;top:466.5px;width:719px;height:1px;background:#f1f1f1;"></div>
<div class="r" style="left:738px;top:493.3px;width:719px;height:1px;background:#f1f1f1;"></div>
<span class="t" id="t71" style="left:773.3px;top:443.01px;font-size:14.2px;color:#222;font-family:'Liberation Mono', monospace;transform:scaleX(1.1651);-webkit-text-stroke:0.3px;">Chris</span>
<span class="t" id="t72" style="left:773.3px;top:470.01px;font-size:14.2px;color:#2a22a2;font-family:'Liberation Mono', monospace;transform:scaleX(1.1929);-webkit-text-stroke:0.3px;">40</span>
<span class="t" id="t73" style="left:1325.8px;top:443.01px;font-size:14.2px;color:#2068b4;font-family:'Liberation Mono', monospace;transform:scaleX(1.1457);text-decoration:underline;text-underline-offset:1.5px;text-decoration-thickness:1px;-webkit-text-stroke:0.2px;">app.js:10</span>
<span class="t" id="t74" style="left:1325.8px;top:470.01px;font-size:14.2px;color:#2068b4;font-family:'Liberation Mono', monospace;transform:scaleX(1.1457);text-decoration:underline;text-underline-offset:1.5px;text-decoration-thickness:1px;-webkit-text-stroke:0.2px;">app.js:14</span>
<div class="r" style="left:1452px;top:519px;width:4.8px;height:30px;background:#fffce4;"></div>
<div class="r" style="left:738px;top:983.3px;width:719px;height:1px;background:#cfcfcf;"></div>
<div class="r" style="left:738px;top:984.3px;width:719px;height:42px;background:#f6f6f6;"></div>
<div class="r" style="left:749.3px;top:987.5px;width:90.7px;height:37px;background:#ffffff;border-radius:3px 3px 0 0;"></div>
<div class="r" style="left:749.3px;top:1021.8px;width:90.7px;height:2.4px;background:#2278d4;"></div>
<span class="t" id="t75" style="left:763.0px;top:992.51px;font-size:15.2px;color:#3a3a3a;font-family:'Liberation Sans', sans-serif;transform:scaleX(1.1271);">Console</span>
<span class="t" id="t76" style="left:852.82px;top:992.51px;font-size:15.2px;color:#737373;font-family:'Liberation Sans', sans-serif;transform:scaleX(1.1784);">Problemi</span>
<svg class="i" preserveAspectRatio="none" style="left:969.2px;top:994.5px;width:21px;height:19px;" viewBox="0 0 21 19"><path d="M10.5 0V19M0 9.5H21" stroke="#1b1b1b" stroke-width="1.5"/></svg>
<svg class="i" preserveAspectRatio="none" style="left:1417.3px;top:997.2px;width:18px;height:16.6px;" viewBox="0 0 18 17"><path d="M1 1L17 16M17 1L1 16" stroke="#2a2a2a" stroke-width="1.4"/></svg>
</div></div>
</div>
</body></html>
